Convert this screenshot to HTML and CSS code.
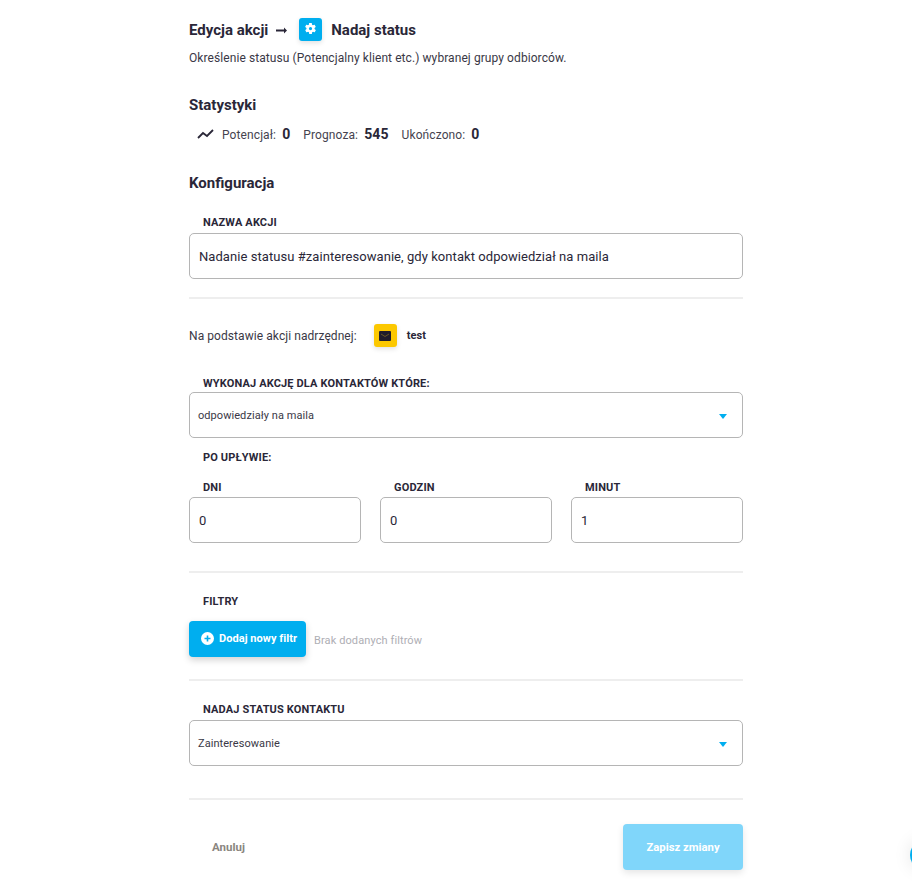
FILE: index.html
```html
<!DOCTYPE html>
<html lang="pl">

<head>
    <meta charset="UTF-8">
    <meta name="viewport" content="width=device-width, initial-scale=1.0">
    <title>Edycja akcji</title>
    <link rel="stylesheet" href="styles.css">
</head>

<body>
    <div class="page">
        <div class="title-row">
            <h2>Edycja akcji</h2>
            <svg class="arrow" width="11" height="7" viewBox="0 0 11 7"><path d="M0 2.600h8V0.500L11 3.500 8 6.500V4.400H0z" fill="#2a2738"/></svg>
            <span class="action-icon blue">
                <svg class="gear" width="13" height="13" viewBox="0 0 24 24"><path fill="#fff" d="M19.400 13c.1-.3.1-.7.1-1s0-.7-.1-1l2.100-1.600c.2-.2.2-.4.1-.6l-2-3.500c-.1-.2-.4-.3-.6-.2l-2.500 1c-.5-.4-1.100-.7-1.700-1l-.4-2.700c0-.2-.2-.4-.5-.4h-4c-.3 0-.5.2-.5.4l-.4 2.700c-.6.2-1.200.6-1.700 1l-2.500-1c-.2-.1-.5 0-.6.2l-2 3.500c-.1.2-.1.5.1.6L4.600 11c-.1.3-.1.700-.1 1s0 .7.1 1l-2.100 1.600c-.2.2-.2.4-.1.6l2 3.500c.1.2.4.3.6.2l2.500-1c.5.4 1.100.7 1.700 1l.4 2.700c0 .2.2.4.5.4h4c.3 0 .5-.2.5-.4l.4-2.700c.6-.2 1.200-.6 1.700-1l2.500 1c.2.1.5 0 .6-.2l2-3.500c.1-.2.1-.5-.1-.6zM12 15a3 3 0 1 1 0-6 3 3 0 0 1 0 6z"/></svg>
            </span>
            <h2>Nadaj status</h2>
        </div>
        <p class="description">Określenie statusu (Potencjalny klient etc.) wybranej grupy odbiorców.</p>

        <h3 class="stats-title">Statystyki</h3>
        <div class="stats">
            <svg class="stats-icon" width="17" height="10" viewBox="0 0 17 10"><path d="M1 9l5-5 4 3 6-6" fill="none" stroke="#2a2738" stroke-width="1.800"/></svg>
            <span class="stat">Potencjał: <b>0</b></span>
            <span class="stat">Prognoza: <b>545</b></span>
            <span class="stat">Ukończono: <b>0</b></span>
        </div>

        <h3 class="config-title">Konfiguracja</h3>
        <div class="form-group">
            <label>NAZWA AKCJI</label>
            <div class="field">Nadanie statusu #zainteresowanie, gdy kontakt odpowiedział na maila</div>
        </div>
        <hr class="line-1">

        <div class="parent-row">
            <span>Na podstawie akcji nadrzędnej:</span>
            <span class="action-icon yellow">
                <svg width="12" height="10" viewBox="0 0 12 10"><rect width="12" height="10" rx="1" fill="#1f1d2b"/><path d="M2 3l4 2.500L10 3" fill="none" stroke="#7a6520" stroke-width="0.800"/></svg>
            </span>
            <b>test</b>
        </div>

        <div class="form-group group-select">
            <label>WYKONAJ AKCJĘ DLA KONTAKTÓW KTÓRE:</label>
            <div class="field select">odpowiedziały na maila<span class="caret"></span></div>
        </div>

        <label class="after-label">PO UPŁYWIE:</label>
        <div class="time-grid">
            <div class="form-group">
                <label>DNI</label>
                <div class="field">0</div>
            </div>
            <div class="form-group">
                <label>GODZIN</label>
                <div class="field">0</div>
            </div>
            <div class="form-group">
                <label>MINUT</label>
                <div class="field">1</div>
            </div>
        </div>
        <hr class="line-2">

        <label class="filters-label">FILTRY</label>
        <div class="filters">
            <button class="btn add-filter" type="button">
                <svg width="13" height="13" viewBox="0 0 13 13"><circle cx="6.500" cy="6.500" r="6.500" fill="#fff"/><path d="M6.500 3.500v6M3.500 6.500h6" stroke="#00aeef" stroke-width="1.600"/></svg>
                Dodaj nowy filtr
            </button>
            <span class="no-filters">Brak dodanych filtrów</span>
        </div>
        <hr class="line-3">

        <div class="form-group">
            <label>NADAJ STATUS KONTAKTU</label>
            <div class="field select">Zainteresowanie<span class="caret"></span></div>
        </div>
        <hr class="line-4">

        <div class="footer">
            <button class="cancel" type="button">Anuluj</button>
            <button class="btn save" type="button">Zapisz zmiany</button>
        </div>
    </div>
    <div class="chat-bubble"></div>
</body>

</html>
```

FILE: styles.css
```css
html,
body {
    height: 883px;
    overflow: hidden;
}

body {
    margin: 0;
    position: relative;
    background: #fff;
    color: #2a2738;
    font-family: Roboto, "Liberation Sans", sans-serif;
}

.page {
    width: 554px;
    margin-left: 189px;
    padding-top: 18px;
}

h2,
h3 {
    margin: 0;
    font-size: 15px;
    font-weight: 700;
    line-height: 23px;
}

.title-row h2 {
    padding-top: 2px;
}

.title-row {
    display: flex;
    align-items: center;
    height: 23px;
}

.arrow {
    margin: 1px 12px 0 8px;
}

.action-icon {
    width: 23px;
    height: 23px;
    border-radius: 3px;
    display: flex;
    align-items: center;
    justify-content: center;
    box-shadow: 0 2px 5px rgba(0, 0, 0, 0.12);
}

.action-icon.blue {
    background: #00aeef;
    margin-right: 9px;
}

.gear {
    margin-bottom: 2px;
}

.action-icon.yellow {
    background: #fcc800;
    margin-left: 17px;
    margin-right: 10px;
}

.description {
    margin: 9px 0 0;
    font-size: 12px;
    line-height: 16px;
    letter-spacing: 0.08px;
    color: #3a3846;
}

.stats-title {
    margin-top: 28px;
}

.stats {
    display: flex;
    align-items: center;
    height: 20px;
    margin-top: 7px;
    padding-left: 8px;
    font-size: 12px;
    letter-spacing: 0.1px;
    color: #45434f;
}

.stats-icon {
    margin-right: 8px;
}

.stat {
    margin-right: 13px;
}

.stat b {
    margin-left: 3px;
    font-size: 14px;
    color: #2a2738;
}

.config-title {
    margin-top: 28px;
}

label {
    display: block;
    padding-left: 14px;
    font-size: 11px;
    font-weight: 700;
    line-height: 13px;
    letter-spacing: 0.15px;
}

.form-group label {
    margin-bottom: 4px;
}

.config-title + .form-group {
    margin-top: 21px;
}

.field {
    box-sizing: border-box;
    height: 46px;
    padding: 0 9px;
    display: flex;
    align-items: center;
    border: 1px solid #b5b5b5;
    border-radius: 5px;
    font-size: 13px;
    letter-spacing: 0.06px;
    color: #2a2738;
}

.field.select {
    justify-content: space-between;
    padding: 0 15px 0 8px;
    font-size: 11px;
    color: #3a3846;
}

.caret {
    width: 0;
    height: 0;
    margin-top: 3px;
    border-left: 4.500px solid transparent;
    border-right: 4.500px solid transparent;
    border-top: 5px solid #00aeef;
}

hr {
    margin: 0;
    border: none;
    border-top: 2px solid #eee;
}

.line-1 {
    margin-top: 18px;
}

.parent-row {
    display: flex;
    align-items: center;
    height: 23px;
    margin-top: 25px;
    font-size: 12px;
    letter-spacing: 0.07px;
    color: #3a3846;
}

.parent-row b {
    font-size: 11px;
    color: #2a2738;
}

.group-select {
    margin-top: 30px;
}

.group-select label {
    margin-bottom: 2px;
}

.after-label {
    margin-top: 13px;
}

.time-grid {
    display: grid;
    grid-template-columns: repeat(3, 1fr);
    column-gap: 19px;
    margin-top: 17px;
}

.time-grid label {
    margin-bottom: 3px;
}

.line-2 {
    margin-top: 28px;
}

.filters-label {
    margin-top: 22px;
}

.filters {
    display: flex;
    align-items: center;
    margin-top: 13px;
}

.btn {
    border: none;
    border-radius: 4px;
    background: #00aeef;
    color: #fff;
    font-family: inherit;
    font-size: 11px;
    font-weight: 700;
    box-shadow: 0 3px 7px rgba(0, 0, 0, 0.18);
}

.add-filter {
    display: flex;
    align-items: center;
    gap: 5px;
    width: 117px;
    height: 36px;
    padding: 0 0 2px 12px;
    letter-spacing: 0.05px;
    white-space: nowrap;
}

.no-filters {
    margin: 3px 0 0 8px;
    font-size: 11px;
    letter-spacing: 0.1px;
    color: #aeaeb4;
}

.line-3 {
    margin-top: 22px;
}

.line-3 + .form-group {
    margin-top: 22px;
}

.line-4 {
    margin-top: 32px;
}

.footer {
    display: flex;
    justify-content: space-between;
    align-items: center;
    margin-top: 24px;
}

.cancel {
    border: none;
    background: none;
    padding: 0 0 0 23px;
    font-family: inherit;
    font-size: 11.500px;
    font-weight: 700;
    color: #8a8580;
}

.save {
    width: 120px;
    height: 46px;
    font-size: 11.300px;
    background: #80d6fa;
    box-shadow: 0 3px 7px rgba(0, 0, 0, 0.1);
}

.chat-bubble {
    position: absolute;
    left: 910px;
    top: 840px;
    width: 30px;
    height: 30px;
    border-radius: 50%;
    background: #00aeef;
    box-shadow: 0 0 18px rgba(0, 0, 0, 0.1);
}
```
